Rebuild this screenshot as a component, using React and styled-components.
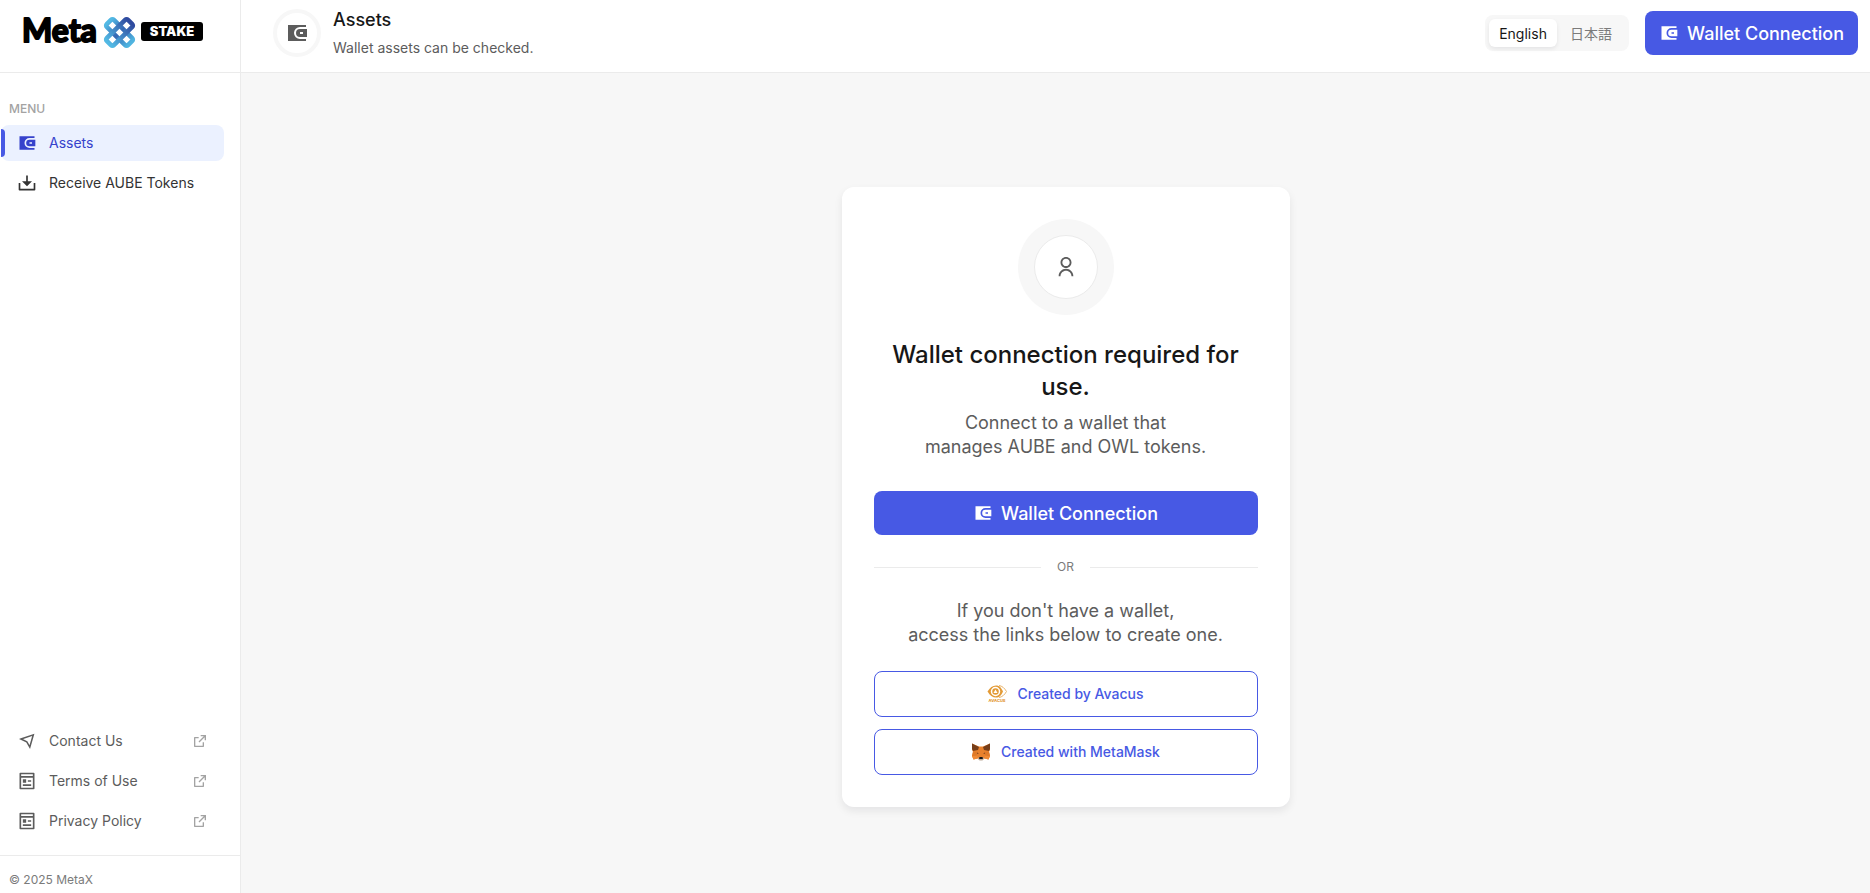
import React, { useState } from "react";
import styled, { createGlobalStyle } from "styled-components";
import {
  RiDownload2Line,
  RiPagesLine,
  RiExternalLinkLine,
  RiUserLine,
} from "react-icons/ri";

const WalletIcon = () => (
  <svg width="24" height="24" viewBox="0 0 24 24" fill="currentColor">
    <path d="M3 4h18v2h-6a6 6 0 0 0 0 12h6v2H3Z" />
    <path
      fillRule="evenodd"
      d="M15 8h7v8h-7a4 4 0 0 1 0-8Zm0 3v2h3v-2Z"
    />
  </svg>
);

const PlaneIcon = () => (
  <svg
    width="20"
    height="20"
    viewBox="0 0 20 20"
    fill="none"
    stroke="currentColor"
    strokeWidth="1.500"
  >
    <path d="M4 8 16.300 3.800 12.800 16 9.800 10.800Z" />
  </svg>
);

const footerLinks = [
  { label: "Contact Us", icon: PlaneIcon },
  { label: "Terms of Use", icon: RiPagesLine },
  { label: "Privacy Policy", icon: RiPagesLine },
];

const App = () => {
  const [lang, setLang] = useState("en");

  return (
    <Layout>
      <GlobalStyle />
      <Sidebar>
        <LogoLink href="#" aria-label="MetaX Stake">
          <Logo />
        </LogoLink>
        <Menu>
          <MenuLabel>MENU</MenuLabel>
          <MenuItem href="#" $active>
            <WalletIcon />
            <span>Assets</span>
          </MenuItem>
          <MenuItem href="#">
            <RiDownload2Line />
            <span>Receive AUBE Tokens</span>
          </MenuItem>
        </Menu>
        <Menu>
          {footerLinks.map(({ label, icon: Icon }) => (
            <MenuItem key={label} href="#" $muted>
              <Icon />
              <span>{label}</span>
              <ExternalIcon />
            </MenuItem>
          ))}
        </Menu>
        <Copyright>© 2025 MetaX</Copyright>
      </Sidebar>

      <Content>
        <Header>
          <HeaderIcon>
            <WalletIcon />
          </HeaderIcon>
          <HeaderText>
            <PageTitle>Assets</PageTitle>
            <PageSubtitle>Wallet assets can be checked.</PageSubtitle>
          </HeaderText>
          <LangSwitch>
            <LangButton $active={lang === "en"} onClick={() => setLang("en")}>
              English
            </LangButton>
            <LangButton $active={lang === "ja"} onClick={() => setLang("ja")}>
              日本語
            </LangButton>
          </LangSwitch>
          <PrimaryButton>
            <WalletIcon />
            Wallet Connection
          </PrimaryButton>
        </Header>

        <Main>
          <Card>
            <Avatar>
              <AvatarInner>
                <RiUserLine />
              </AvatarInner>
            </Avatar>
            <CardTitle>Wallet connection required for use.</CardTitle>
            <CardText>
              Connect to a wallet that
              <br />
              manages AUBE and OWL tokens.
            </CardText>
            <ConnectButton>
              <WalletIcon />
              Wallet Connection
            </ConnectButton>
            <Divider>OR</Divider>
            <CardText>
              If you don't have a wallet,
              <br />
              access the links below to create one.
            </CardText>
            <WalletLinks>
              <WalletLink href="#">
                <AvacusIcon />
                Created by Avacus
              </WalletLink>
              <WalletLink href="#">
                <MetaMaskIcon />
                Created with MetaMask
              </WalletLink>
            </WalletLinks>
          </Card>
        </Main>
      </Content>
    </Layout>
  );
};

export default App;

const Logo = () => (
  <svg width="184" height="52" viewBox="0 -8 184 52">
    <defs>
      <linearGradient id="logoUp" x1="0" y1="0" x2="1" y2="0">
        <stop offset="0" stopColor="#52b9e4" />
        <stop offset="1" stopColor="#2f4a9f" />
      </linearGradient>
      <linearGradient id="logoDown" x1="0" y1="0" x2="1" y2="0">
        <stop offset="0" stopColor="#52b9e4" />
        <stop offset="0.5" stopColor="#3667b3" />
        <stop offset="1" stopColor="#4fb4e0" />
      </linearGradient>
    </defs>
    <LogoWord x="1" y="28">
      Meta
    </LogoWord>
    <g transform="translate(98.500 18.500)" fill="none" strokeWidth="4.600">
      <rect
        x="-15"
        y="-5"
        width="30"
        height="10"
        rx="2"
        stroke="url(#logoDown)"
        transform="rotate(45)"
      />
      <rect
        x="-15"
        y="-5"
        width="30"
        height="10"
        rx="2"
        stroke="url(#logoUp)"
        transform="rotate(-45)"
      />
    </g>
    <rect x="120" y="8" width="62" height="19" rx="3" />
    <LogoTag x="151" y="22">
      STAKE
    </LogoTag>
  </svg>
);

const AvacusIcon = () => (
  <svg width="20" height="20" viewBox="0 0 20 20" fill="none">
    <path
      d="M.5 7.500C3 3.500 5.500 1.500 9 1.500s5 2 7 6c-2 4-3.500 6-7 6s-6-2-8.500-6Z"
      fill="#e39a35"
    />
    <path
      d="M12 1.500c3 .5 5.500 2.500 7.500 6-2 3.500-4.500 5.500-7.500 6"
      stroke="#e9b46b"
    />
    <circle cx="8.500" cy="7.500" r="4" stroke="#fff" strokeWidth="1.500" />
    <path d="m8.500 5.500 2 3.500h-4Z" fill="#fff" />
    <AvacusWord x="10" y="18">
      AVACUS
    </AvacusWord>
  </svg>
);

const MetaMaskIcon = () => (
  <svg width="20" height="20" viewBox="0 0 20 20">
    <path
      d="M1 1.500 8 4.500h4l7-3v6L18 10l1 4-1.500 3.500-4-1L11.500 18h-3l-2-1.500-4 1L1 14l1-4-1-2.500Z"
      fill="#e8812d"
    />
    <path
      d="M1 1.500 8 5 7 8 2 9 1 7ZM19 1.500 12 5l1 3 5 1 1-2Z"
      fill="#763e1a"
    />
    <path d="m1 14 5.500-.5v3l-4 1ZM19 14l-5.500-.5v3l4 1Z" fill="#f08a35" />
    <path d="m2 9.500 5 .5-1 3.500L1 14ZM18 9.500l-5 .5 1 3.500 5 .5Z" fill="#e07a28" />
    <path d="m6 10.500 2 1-2 .5ZM14 10.500l-2 1 2 .5Z" fill="#8a4a20" />
    <path d="m6.500 16 2-.5h3l2 .5-2 2.500h-3Z" fill="#c0ad9e" />
    <path d="m8.200 15.500.6-.5h2.400l.6.500v1.500H8.200Z" fill="#161616" />
  </svg>
);

const GlobalStyle = createGlobalStyle`
  *, *::before, *::after {
    box-sizing: border-box;
  }

  body {
    margin: 0;
    font-family: Inter, "Noto Sans CJK JP", sans-serif;
    font-size: 14px;
    line-height: 20px;
    color: #171717;
    background: #f7f7f7;
  }

  h1, h2, p {
    margin: 0;
  }

  a {
    text-decoration: none;
  }

  button {
    font-family: inherit;
    border: 0;
    cursor: pointer;
  }
`;

const Layout = styled.div`
  display: flex;
  min-height: 100vh;
`;

const Sidebar = styled.aside`
  display: flex;
  flex-direction: column;
  flex: 0 0 241px;
  background: #fff;
  border-right: 1px solid #ebebeb;
`;

const LogoLink = styled.a`
  display: flex;
  height: 73px;
  padding: 6px 21px;
  border-bottom: 1px solid #ebebeb;
`;

const LogoWord = styled.text`
  font-family: Lato, sans-serif;
  font-size: 32px;
  font-weight: 700;
  stroke: #000;
  stroke-width: 2px;
  stroke-linejoin: round;
`;

const LogoTag = styled.text`
  font-family: Inter, sans-serif;
  font-size: 13px;
  font-weight: 900;
  fill: #fff;
  text-anchor: middle;
`;

const AvacusWord = styled.text`
  font-size: 4px;
  font-weight: 800;
  fill: #e39a35;
  text-anchor: middle;
`;

const Menu = styled.nav`
  display: flex;
  flex-direction: column;
  gap: 4px;
  padding: 24px 16px 16px 1px;

  & + & {
    margin-top: auto;
  }
`;

const MenuLabel = styled.div`
  padding: 4px 8px;
  font-size: 12px;
  line-height: 16px;
  font-weight: 500;
  color: #a3a3a3;
`;

const MenuItem = styled.a`
  position: relative;
  display: flex;
  align-items: center;
  gap: 12px;
  padding: 8px 16px;
  border-radius: 8px;
  color: ${({ $active, $muted }) =>
    $active ? "#3642cc" : $muted ? "#5c5c5c" : "#333"};
  background: ${({ $active }) => ($active ? "#ebf1ff" : "transparent")};

  svg {
    width: 20px;
    height: 20px;
  }

  &::before {
    content: "";
    display: ${({ $active }) => ($active ? "block" : "none")};
    position: absolute;
    left: 0;
    top: 4px;
    bottom: 4px;
    width: 4px;
    border-radius: 0 4px 4px 0;
    background: #4759e4;
  }
`;

const ExternalIcon = styled(RiExternalLinkLine)`
  && {
    width: 16px;
    height: 16px;
  }
  margin-left: auto;
  color: #a3a3a3;
`;

const Copyright = styled.footer`
  height: 38px;
  padding: 16px 9px 0;
  border-top: 1px solid #ebebeb;
  font-size: 12px;
  line-height: 16px;
  color: #7b7b7b;
`;

const Content = styled.div`
  display: flex;
  flex-direction: column;
  flex: 1;
  min-width: 0;
`;

const Header = styled.header`
  display: flex;
  align-items: center;
  gap: 16px;
  height: 73px;
  padding: 0 12px 6px 32px;
  background: #fff;
  border-bottom: 1px solid #ebebeb;
`;

const HeaderIcon = styled.div`
  display: flex;
  align-items: center;
  justify-content: center;
  width: 48px;
  height: 48px;
  border: 4px solid #f7f7f7;
  border-radius: 50%;
  color: #5c5c5c;
`;

const HeaderText = styled.div`
  flex: 1;
  margin-left: -4px;
`;

const PageTitle = styled.h1`
  margin-bottom: 6px;
  font-size: 18px;
  line-height: 24px;
  font-weight: 500;
`;

const PageSubtitle = styled.p`
  color: #5c5c5c;
`;

const LangSwitch = styled.div`
  display: flex;
  padding: 4px;
  border-radius: 8px;
  background: #f7f7f7;
`;

const LangButton = styled.button`
  height: 28px;
  padding: 0 8px;
  min-width: 68px;
  border-radius: 6px;
  font-size: 14px;
  color: ${({ $active }) => ($active ? "#171717" : "#7b7b7b")};
  background: ${({ $active }) => ($active ? "#fff" : "transparent")};
  box-shadow: ${({ $active }) =>
    $active ? "0 2px 4px rgba(14, 18, 27, 0.08)" : "none"};
`;

const PrimaryButton = styled.button`
  display: flex;
  align-items: center;
  justify-content: center;
  gap: 8px;
  height: 44px;
  padding: 0 14px;
  border-radius: 8px;
  font-size: 18px;
  font-weight: 500;
  color: #fff;
  background: #4759e4;

  svg {
    width: 20px;
    height: 20px;
  }
`;

const Main = styled.main`
  display: flex;
  flex: 1;
  align-items: center;
  justify-content: center;
  padding: 28px 12px 0 32px;
`;

const Card = styled.section`
  width: 100%;
  max-width: 448px;
  padding: 32px;
  border-radius: 12px;
  text-align: center;
  background: #fff;
  box-shadow: 0 4px 8px rgba(14, 18, 27, 0.08);
`;

const Avatar = styled.div`
  width: 96px;
  margin: 0 auto 24px;
  padding: 16px;
  border-radius: 50%;
  background: #f7f7f7;
`;

const AvatarInner = styled.div`
  display: flex;
  align-items: center;
  justify-content: center;
  height: 64px;
  border: 1px solid #ebebeb;
  border-radius: 50%;
  color: #5c5c5c;
  background: #fff;

  svg {
    width: 22px;
    height: 22px;
  }
`;

const CardTitle = styled.h2`
  margin-bottom: 8px;
  font-size: 24px;
  line-height: 32px;
  font-weight: 500;
`;

const CardText = styled.p`
  font-size: 18px;
  line-height: 24px;
  color: #5c5c5c;
`;

const ConnectButton = styled(PrimaryButton)`
  width: 100%;
  margin-top: 32px;
`;

const Divider = styled.div`
  display: flex;
  align-items: center;
  gap: 16px;
  margin: 24px 0;
  font-size: 12px;
  line-height: 16px;
  color: #7b7b7b;

  &::before,
  &::after {
    content: "";
    flex: 1;
    height: 1px;
    background: #ebebeb;
  }
`;

const WalletLinks = styled.div`
  display: grid;
  gap: 12px;
  margin-top: 24px;
`;

const WalletLink = styled.a`
  display: flex;
  align-items: center;
  justify-content: center;
  gap: 10px;
  height: 46px;
  border: 1px solid #4759e4;
  border-radius: 8px;
  font-weight: 500;
  color: #4759e4;
`;
